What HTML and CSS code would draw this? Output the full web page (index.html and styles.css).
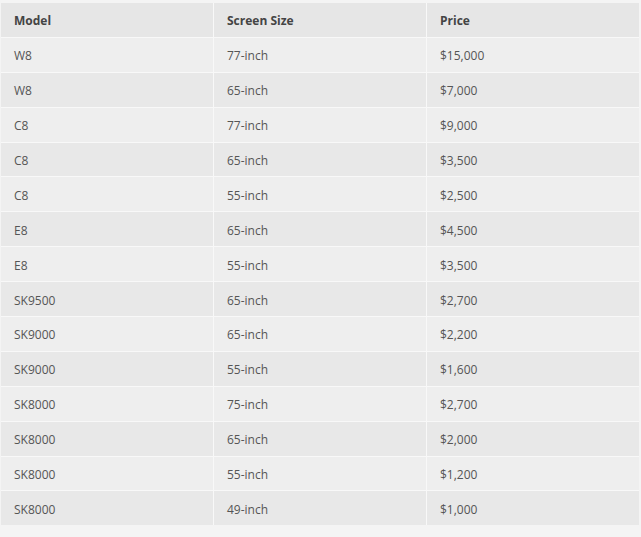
FILE: index.html
```html
<!DOCTYPE html>
<html>
<head>
<meta charset="utf-8">
<link rel="stylesheet" href="styles.css">
</head>
<body>
<div class="wrap">
<table class="tv-table">
<thead>
<tr><th>Model</th><th>Screen Size</th><th>Price</th></tr>
</thead>
<tbody>
<tr><td>W8</td><td>77-inch</td><td>$15,000</td></tr>
<tr><td>W8</td><td>65-inch</td><td>$7,000</td></tr>
<tr><td>C8</td><td>77-inch</td><td>$9,000</td></tr>
<tr><td>C8</td><td>65-inch</td><td>$3,500</td></tr>
<tr><td>C8</td><td>55-inch</td><td>$2,500</td></tr>
<tr><td>E8</td><td>65-inch</td><td>$4,500</td></tr>
<tr><td>E8</td><td>55-inch</td><td>$3,500</td></tr>
<tr><td>SK9500</td><td>65-inch</td><td>$2,700</td></tr>
<tr><td>SK9000</td><td>65-inch</td><td>$2,200</td></tr>
<tr><td>SK9000</td><td>55-inch</td><td>$1,600</td></tr>
<tr><td>SK8000</td><td>75-inch</td><td>$2,700</td></tr>
<tr><td>SK8000</td><td>65-inch</td><td>$2,000</td></tr>
<tr><td>SK8000</td><td>55-inch</td><td>$1,200</td></tr>
<tr><td>SK8000</td><td>49-inch</td><td>$1,000</td></tr>
</tbody>
</table>
</div>
</body>
</html>
```
FILE: styles.css
```css
html, body {
  margin: 0;
  padding: 0;
  background: #f4f4f4;
}
.wrap {
  padding: 3px 2px 0 1px;
}
.tv-table {
  width: 638px;
  border-collapse: collapse;
  font-family: "Open Sans", "Liberation Sans", sans-serif;
  font-size: 12px;
  color: #555555;
  table-layout: fixed;
}
.tv-table th, .tv-table td {
  text-align: left;
  padding: 2px 13px 0;
  height: 31.9px;
  border: 1px solid #f8f8f8;
  border-top: none;
  border-left: none;
}
.tv-table th:last-child, .tv-table td:last-child {
  border-right: none;
}
.tv-table tbody tr:last-child td {
  border-bottom: none;
}
.tv-table th {
  font-weight: 700;
  color: #444444;
  background: #e6e6e6;
}
.tv-table th:nth-child(1), .tv-table td:nth-child(1) { width: 186px; }
.tv-table th:nth-child(2), .tv-table td:nth-child(2) { width: 186px; }
.tv-table tbody tr:nth-child(odd) td { background: #eeeeee; }
.tv-table tbody tr:nth-child(even) td { background: #e8e8e8; }
```
